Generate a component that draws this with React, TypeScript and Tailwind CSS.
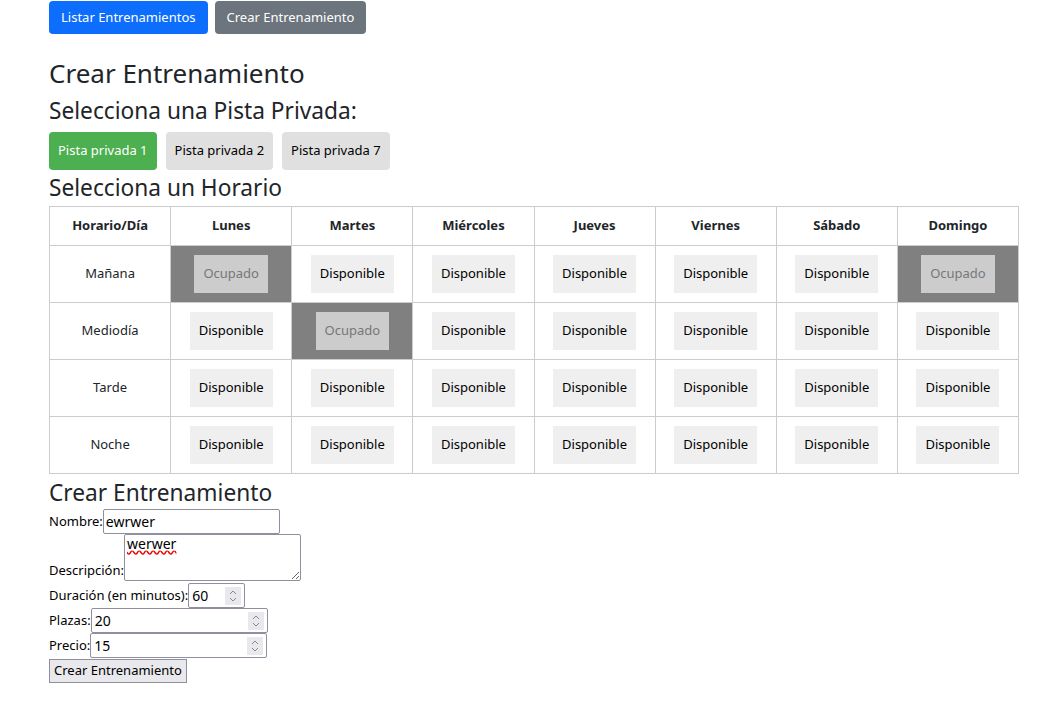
import { useState } from "react";

const DAYS = ["Lunes", "Martes", "Miércoles", "Jueves", "Viernes", "Sábado", "Domingo"];
const SLOTS = ["Mañana", "Mediodía", "Tarde", "Noche"];
const PISTAS = ["Pista privada 1", "Pista privada 2", "Pista privada 7"];

// occupied slots: "slot-dayIndex"
const OCUPADOS = new Set(["Mañana-0", "Mañana-6", "Mediodía-1"]);

function Spinner() {
  return (
    <span className="mr-[3px] flex h-[18px] w-[16px] shrink-0 flex-col items-center justify-center bg-[#e9e9ed]">
      <svg width="8" height="14" viewBox="0 0 8 14" fill="none" stroke="#8a8a8a" strokeWidth="1">
        <path d="M1 5 L4 2 L7 5" />
        <path d="M1 9 L4 12 L7 9" />
      </svg>
    </span>
  );
}

function NumberField({ value, width }: { value: string; width: string }) {
  const [v, setV] = useState(value);
  return (
    <span className={`flex h-[25px] items-center rounded-[2px] border border-[#8f8f9d] bg-white ${width}`}>
      <input
        value={v}
        onChange={(e) => setV(e.target.value)}
        className="h-full min-w-0 flex-1 bg-transparent px-[3px] text-[14px] text-black outline-none"
      />
      <Spinner />
    </span>
  );
}

export default function App() {
  const [pista, setPista] = useState(0);
  const [nombre, setNombre] = useState("ewrwer");
  const [desc, setDesc] = useState("werwer");

  return (
    <div
      className="min-h-[713px] bg-white pl-[49px] pt-px text-[#212529]"
      style={{ fontFamily: '"Noto Sans", "Open Sans", sans-serif' }}
    >
      <div className="flex gap-[7px]">
        <button className="h-[33px] rounded-[4px] bg-[#0d6efd] px-[12px] text-[13px] text-white">
          Listar Entrenamientos
        </button>
        <button className="h-[33px] rounded-[4px] bg-[#6c757d] px-[12px] text-[13px] text-white">
          Crear Entrenamiento
        </button>
      </div>

      <h3 className="mt-[23px] text-[26px] leading-[32px]">Crear Entrenamiento</h3>
      <h4 className="mt-[8px] text-[22.7px] leading-[28px]">Selecciona una Pista Privada:</h4>

      <div className="mt-[7px] flex gap-[9px]">
        {PISTAS.map((p, i) => (
          <button
            key={p}
            onClick={() => setPista(i)}
            className={`h-[38px] rounded-[4px] px-[9px] text-[13px] ${
              pista === i ? "bg-[#4caf50] text-white" : "bg-[#e0e0e0] text-black"
            }`}
          >
            {p}
          </button>
        ))}
      </div>

      <h4 className="mt-[2px] text-[22.7px] leading-[32px]">Selecciona un Horario</h4>

      <table className="mt-[2px] w-[970px] table-fixed border-collapse text-[13px]">
        <thead>
          <tr className="h-[39px]">
            <th className="border border-[#cccccc] font-bold">Horario/Día</th>
            {DAYS.map((d) => (
              <th key={d} className="border border-[#cccccc] font-bold">
                {d}
              </th>
            ))}
          </tr>
        </thead>
        <tbody>
          {SLOTS.map((s) => (
            <tr key={s} className="h-[57px]">
              <td className="border border-[#cccccc] text-center">{s}</td>
              {DAYS.map((d, i) => {
                const ocupado = OCUPADOS.has(`${s}-${i}`);
                return (
                  <td
                    key={d}
                    className={`border border-[#cccccc] text-center ${ocupado ? "bg-[#808080]" : ""}`}
                  >
                    {ocupado ? (
                      <button disabled className="h-[38px] bg-[#cccccc] px-[9px] text-[#777777]">
                        Ocupado
                      </button>
                    ) : (
                      <button className="h-[38px] bg-[#efefef] px-[9px] text-black">Disponible</button>
                    )}
                  </td>
                );
              })}
            </tr>
          ))}
        </tbody>
      </table>

      <h4 className="mt-[3px] text-[22.7px] leading-[32px]">Crear Entrenamiento</h4>

      <form className="text-[13px] text-black" onSubmit={(e) => e.preventDefault()}>
        <div className="flex items-center">
          <label>Nombre:</label>
          <input
            value={nombre}
            onChange={(e) => setNombre(e.target.value)}
            className="h-[25px] w-[177px] rounded-[2px] border border-[#8f8f9d] px-[2px] text-[14px] outline-none"
          />
        </div>
        <div className="flex items-end">
          <label className="pb-[1px] leading-[20px]">Descripción:</label>
          <textarea
            value={desc}
            onChange={(e) => setDesc(e.target.value)}
            className="h-[47px] w-[177px] rounded-[2px] border border-[#8f8f9d] px-[2px] text-[14px] leading-[18px] underline decoration-[#e00] decoration-wavy outline-none"
          />
        </div>
        <div className="mt-[2px] flex items-center">
          <label>Duración (en minutos):</label>
          <NumberField value="60" width="w-[57px]" />
        </div>
        <div className="flex items-center">
          <label>Plazas:</label>
          <NumberField value="20" width="w-[177px]" />
        </div>
        <div className="flex items-center">
          <label>Precio:</label>
          <NumberField value="15" width="w-[177px]" />
        </div>
        <button
          type="submit"
          className="mt-[1px] h-[24px] border border-[#8f8f9d] bg-[#e9e9ed] px-[4px] text-[13px] text-black"
        >
          Crear Entrenamiento
        </button>
      </form>
    </div>
  );
}
